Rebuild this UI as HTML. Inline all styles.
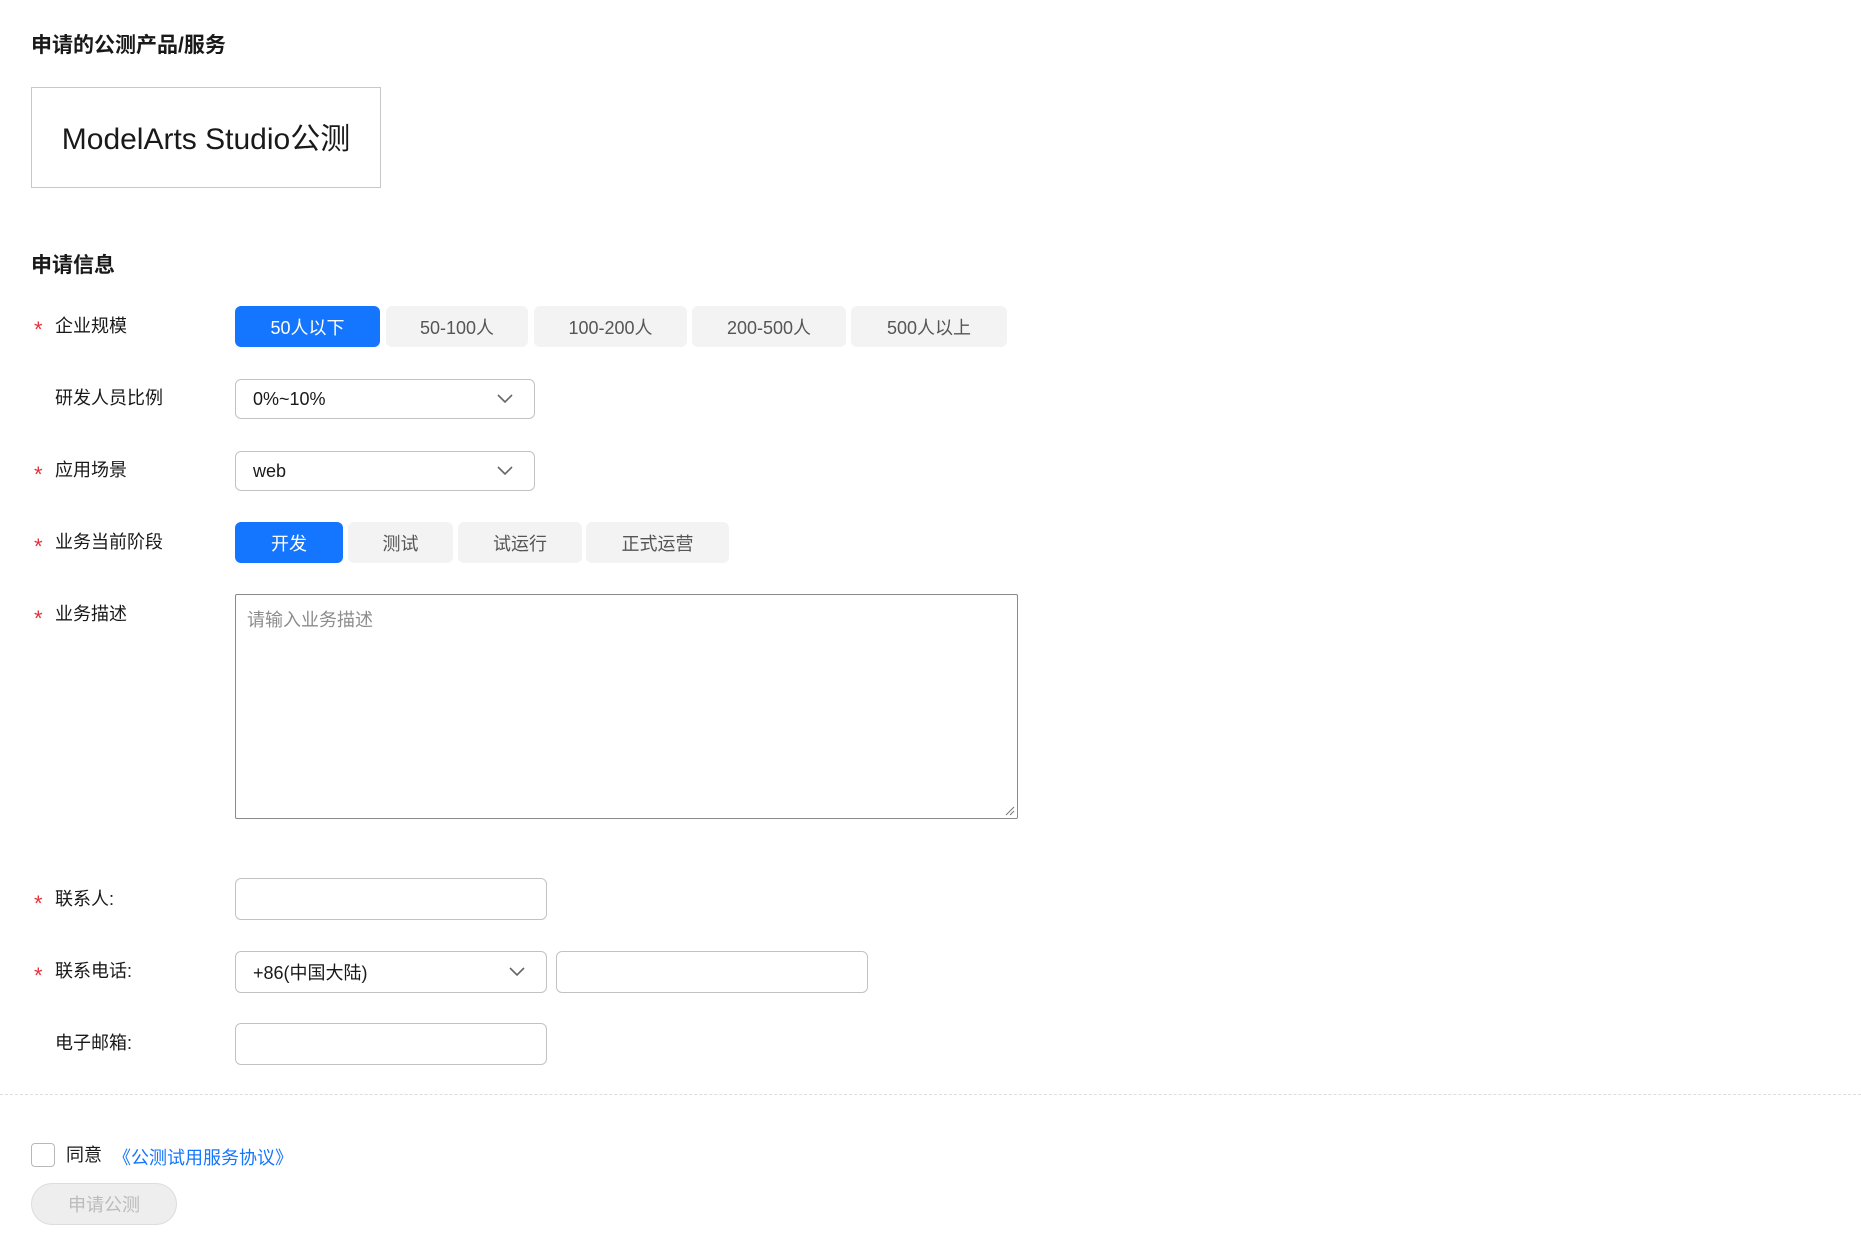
<!DOCTYPE html>
<html><head><meta charset="utf-8"><style>
*{box-sizing:border-box;margin:0;padding:0}
body{width:1861px;height:1255px;background:#fff;font-family:"Liberation Sans","Noto Sans CJK SC",sans-serif;color:#1a1a1a;position:relative;overflow:hidden}
.a{position:absolute}
.h{font-weight:bold;font-size:21px;color:#191919}
.lbl{font-size:18px;color:#191919;left:55px;line-height:24px}
.star{color:#e8303a;font-size:22px;left:34px;line-height:24px}
.btn{position:absolute;background:#f3f3f3;color:#555;font-size:18px;border-radius:6px;display:flex;align-items:center;justify-content:center}
.btn.on{background:#1476ff;color:#fff}
.box{position:absolute;border:1px solid #c2c2c2;border-radius:6px;background:#fff}
.sel{display:flex;align-items:center;padding-left:17px;font-size:18px;color:#191919}
.chev{position:absolute;right:21px;top:50%;margin-top:-5px}
</style></head><body>
<div class="a h" style="left:31px;top:29px">申请的公测产品/服务</div>
<div class="a" style="left:31px;top:87px;width:350px;height:101px;border:1px solid #c8c8c8;display:flex;align-items:center;justify-content:center;font-size:30px;color:#191919;padding-bottom:3px">ModelArts Studio公测</div>
<div class="a h" style="left:31px;top:249px">申请信息</div>

<div class="a star" style="top:318px">*</div><div class="a lbl" style="top:314px">企业规模</div>
<div class="btn on" style="left:235px;top:306px;width:145px;height:41px">50人以下</div>
<div class="btn" style="left:386px;top:306px;width:142px;height:41px">50-100人</div>
<div class="btn" style="left:534px;top:306px;width:153px;height:41px">100-200人</div>
<div class="btn" style="left:692px;top:306px;width:154px;height:41px">200-500人</div>
<div class="btn" style="left:851px;top:306px;width:156px;height:41px">500人以上</div>

<div class="a lbl" style="top:386px">研发人员比例</div>
<div class="box sel" style="left:235px;top:379px;width:300px;height:40px">0%~10%<svg class="chev" width="16" height="10" viewBox="0 0 16 10"><path d="M1 1l7 7 7-7" fill="none" stroke="#666" stroke-width="1.6"/></svg></div>

<div class="a star" style="top:463px">*</div><div class="a lbl" style="top:458px">应用场景</div>
<div class="box sel" style="left:235px;top:451px;width:300px;height:40px">web<svg class="chev" width="16" height="10" viewBox="0 0 16 10"><path d="M1 1l7 7 7-7" fill="none" stroke="#666" stroke-width="1.6"/></svg></div>

<div class="a star" style="top:535px">*</div><div class="a lbl" style="top:530px">业务当前阶段</div>
<div class="btn on" style="left:235px;top:522px;width:108px;height:41px">开发</div>
<div class="btn" style="left:348px;top:522px;width:105px;height:41px">测试</div>
<div class="btn" style="left:458px;top:522px;width:124px;height:41px">试运行</div>
<div class="btn" style="left:586px;top:522px;width:143px;height:41px">正式运营</div>

<div class="a star" style="top:607px">*</div><div class="a lbl" style="top:602px">业务描述</div>
<div class="a" style="left:235px;top:594px;width:783px;height:225px;border:1px solid #8a8a8a;border-radius:2px;padding:11px 11px;font-size:18px;color:#8c8c8c">请输入业务描述
<svg style="position:absolute;right:2px;bottom:2px" width="10" height="10"><path d="M9 1L1 9M9 5L5 9" stroke="#777" stroke-width="1"/></svg></div>

<div class="a star" style="top:892px">*</div><div class="a lbl" style="top:887px">联系人:</div>
<div class="box" style="left:235px;top:878px;width:312px;height:42px"></div>

<div class="a star" style="top:964px">*</div><div class="a lbl" style="top:959px">联系电话:</div>
<div class="box sel" style="left:235px;top:951px;width:312px;height:42px">+86(中国大陆)<svg class="chev" width="16" height="10" viewBox="0 0 16 10"><path d="M1 1l7 7 7-7" fill="none" stroke="#666" stroke-width="1.6"/></svg></div>
<div class="box" style="left:556px;top:951px;width:312px;height:42px"></div>

<div class="a lbl" style="top:1031px">电子邮箱:</div>
<div class="box" style="left:235px;top:1023px;width:312px;height:42px"></div>

<div class="a" style="left:0;top:1094px;width:1861px;border-top:1px dashed #ddd"></div>

<div class="a" style="left:31px;top:1143px;width:24px;height:24px;border:1px solid #b8b8b8;border-radius:4px"></div>
<div class="a" style="left:66px;top:1141px;font-size:18px;color:#191919">同意</div>
<div class="a" style="left:113px;top:1144px;font-size:18px;color:#1476ff">《公测试用服务协议》</div>
<div class="a" style="left:31px;top:1183px;width:146px;height:42px;border-radius:21px;background:#eee;border:1px solid #ddd;color:#bbb;font-size:18px;display:flex;align-items:center;justify-content:center">申请公测</div>
</body></html>
